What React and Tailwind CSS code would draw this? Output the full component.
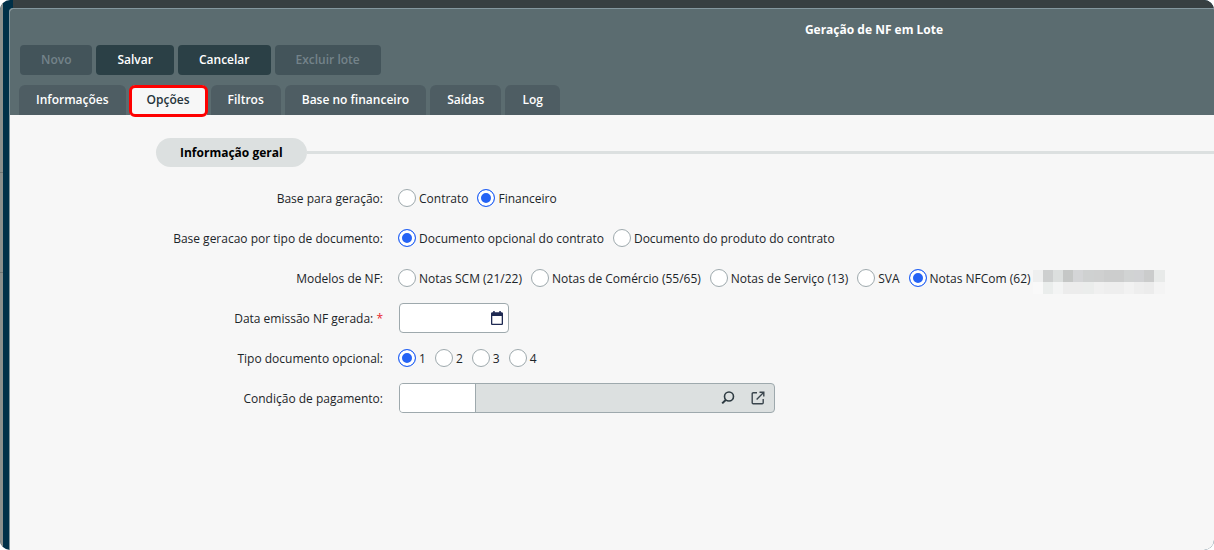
import { useState } from "react";

const tabs = ["Informações", "Opções", "Filtros", "Base no financeiro", "Saídas", "Log"];

const actions = [
  { label: "Novo", disabled: true },
  { label: "Salvar" },
  { label: "Cancelar" },
  { label: "Excluir lote", disabled: true },
];

// Hidden hint next to the NF models
const maskColors = [
  "#eeefef", "#cdcfcf", "#dcdfde", "#c5c7c6", "#d4d5d7", "#cfd1d1", "#cfd0d0",
  "#cccdcd", "#cccdcd", "#d1d3d3", "#d1d2d4", "#cbcccc", "#e8eae9",
  "#f9f9f9", "#eaedec", "#f3f4f4", "#ececec", "#ececec", "#ebedec", "#f0f0f0",
  "#eeeeee", "#eeeeee", "#f2f2f2", "#eeeeee", "#ececec", "#f4f4f4",
];

function Row({ label, required, htmlFor, children }) {
  const Label = htmlFor ? "label" : "span";
  return (
    <div
      className="flex h-10 items-center"
      role={htmlFor ? undefined : "radiogroup"}
      aria-label={htmlFor ? undefined : label}
    >
      <Label htmlFor={htmlFor} className="w-[373px] shrink-0 pt-0.5 text-right">
        {label}:{required && <span className="text-[#e8242e]"> *</span>}
      </Label>
      {children}
    </div>
  );
}

function RadioGroup({ name, options, initial }) {
  const [value, setValue] = useState(initial);
  return (
    <div className="ml-[15px] flex items-center gap-[9px]">
      {options.map((option) => (
        <label key={option} className="flex shrink-0 items-center gap-[3px]">
          <input
            type="radio"
            name={name}
            checked={value === option}
            onChange={() => setValue(option)}
            className="size-[18px] appearance-none rounded-full border border-[#9ea9ad] bg-white checked:border-[#2563f5] checked:bg-[#2563f5] checked:shadow-[inset_0_0_0_3px_#fff]"
          />
          <span className="pt-0.5">{option}</span>
        </label>
      ))}
    </div>
  );
}

function CalendarIcon() {
  return (
    <svg width="12" height="14" viewBox="0 0 12 14" aria-hidden="true">
      <path
        fill="#1e2952"
        fillRule="evenodd"
        d="M2.2 0h1.5v1.3h4.6V0h1.5v1.3h.9c.7 0 1.3.6 1.3 1.3v10.1c0 .7-.6 1.3-1.3 1.3H1.3C.6 14 0 13.400 0 12.700V2.600c0-.7.6-1.3 1.3-1.3h.9zM1.300 5v7.700h9.400V5z"
      />
    </svg>
  );
}

function SearchIcon() {
  return (
    <svg width="14" height="14" viewBox="0 0 14 14" fill="none" stroke="#2e3b42" aria-hidden="true">
      <circle cx="8" cy="5.500" r="4.500" strokeWidth="1.600" />
      <path d="M5 8.700 1.200 12.400" strokeWidth="2" />
    </svg>
  );
}

function OpenIcon() {
  return (
    <svg width="14" height="14" viewBox="0 0 14 14" fill="none" stroke="#3a454d" strokeWidth="1.400" aria-hidden="true">
      <path d="M6 1.700H2.200c-.6 0-1 .4-1 1v9c0 .6.4 1 1 1h9c.6 0 1-.4 1-1V8" />
      <path d="M8.500 1.200h4.300v4.300M12.600 1.400 5.600 8.400" />
    </svg>
  );
}

export default function App() {
  const [activeTab, setActiveTab] = useState("Opções");

  return (
    <div className="flex min-h-screen overflow-hidden rounded-[10px] bg-[#003048] font-['Open_Sans',sans-serif] text-xs text-[#1c2529]">
      {/* Page behind the dialog */}
      <div className="flex w-[3px] shrink-0 flex-col bg-[#8b8f8c]">
        <div className="h-[173px] border-b border-[#6f7472]" />
        <div className="h-[100px] border-b border-[#6f7472]" />
      </div>

      <div className="ml-[6px] flex min-w-0 flex-1 flex-col">
        <div className="ml-1 h-2 shrink-0 bg-[#373f41]" />

        <main className="flex-1 overflow-hidden rounded-tl border-t border-l border-[#84979e] bg-[#f7f7f7]">
          <header className="bg-[#5b6c70] pl-[10px] font-semibold text-white">
            <h1 className="flex h-9 items-center justify-center pt-1.5 pl-[514px] font-bold">
              Geração de NF em Lote
            </h1>

            <div className="flex gap-1">
              {actions.map(({ label, disabled }) => (
                <button
                  key={label}
                  type="button"
                  disabled={disabled}
                  className="h-[30px] rounded bg-[#2b4046] px-[21px] disabled:bg-[#43545a] disabled:text-[#74838a]"
                >
                  {label}
                </button>
              ))}
            </div>

            <div role="tablist" className="-ml-px mt-[10px] flex h-[30px] gap-1">
              {tabs.map((tab) => (
                <button
                  key={tab}
                  type="button"
                  role="tab"
                  aria-selected={tab === activeTab}
                  onClick={() => setActiveTab(tab)}
                  className="relative rounded-t-md bg-[#4e5d63] px-[17px] aria-selected:bg-[#f7f7f7] aria-selected:text-[#26343a]"
                >
                  {tab}
                  {tab === "Opções" && (
                    <span className="absolute -inset-x-px top-0 -bottom-[2px] rounded-md border-3 border-[#fe0000]" />
                  )}
                </button>
              ))}
            </div>
          </header>

          <section>
            <div className="mt-[23px] mb-[11px] ml-[146px] flex items-center">
              <h2 className="flex h-[29px] items-center rounded-full bg-[#dce0e0] px-6 font-bold text-black">
                Informação geral
              </h2>
              <div className="h-[3px] flex-1 bg-[#dce0e0]" />
            </div>

            <Row label="Base para geração">
              <RadioGroup name="base" options={["Contrato", "Financeiro"]} initial="Financeiro" />
            </Row>

            <Row label="Base geracao por tipo de documento">
              <RadioGroup
                name="tipo-base"
                options={["Documento opcional do contrato", "Documento do produto do contrato"]}
                initial="Documento opcional do contrato"
              />
            </Row>

            <Row label="Modelos de NF">
              <RadioGroup
                name="modelo"
                options={[
                  "Notas SCM (21/22)",
                  "Notas de Comércio (55/65)",
                  "Notas de Serviço (13)",
                  "SVA",
                  "Notas NFCom (62)",
                ]}
                initial="Notas NFCom (62)"
              />
              <div className="mt-2 ml-0.5 grid w-[132px] grid-cols-13">
                {maskColors.map((color, i) => (
                  <span key={i} className="h-3" style={{ backgroundColor: color }} />
                ))}
              </div>
            </Row>

            <Row label="Data emissão NF gerada" required htmlFor="data-emissao">
              <div className="ml-4 flex h-[30px] w-[110px] items-center rounded border border-[#9ea9ad] bg-white pr-[5px]">
                <input id="data-emissao" type="text" className="min-w-0 flex-1 px-2 outline-none" />
                <button type="button" aria-label="Abrir calendário">
                  <CalendarIcon />
                </button>
              </div>
            </Row>

            <Row label="Tipo documento opcional">
              <RadioGroup name="tipo-documento" options={["1", "2", "3", "4"]} initial="1" />
            </Row>

            <Row label="Condição de pagamento" htmlFor="condicao">
              <div className="ml-4 flex h-[30px] w-[376px] items-center overflow-hidden rounded border border-[#9ea9ad] bg-[#dce0e0]">
                <input
                  id="condicao"
                  type="text"
                  className="h-full w-[76px] border-r border-[#9ea9ad] bg-white px-2 outline-none"
                />
                <div className="flex flex-1 justify-end gap-4 pr-[9px]">
                  <button type="button" aria-label="Pesquisar">
                    <SearchIcon />
                  </button>
                  <button type="button" aria-label="Abrir cadastro">
                    <OpenIcon />
                  </button>
                </div>
              </div>
            </Row>
          </section>
        </main>
      </div>
    </div>
  );
}
